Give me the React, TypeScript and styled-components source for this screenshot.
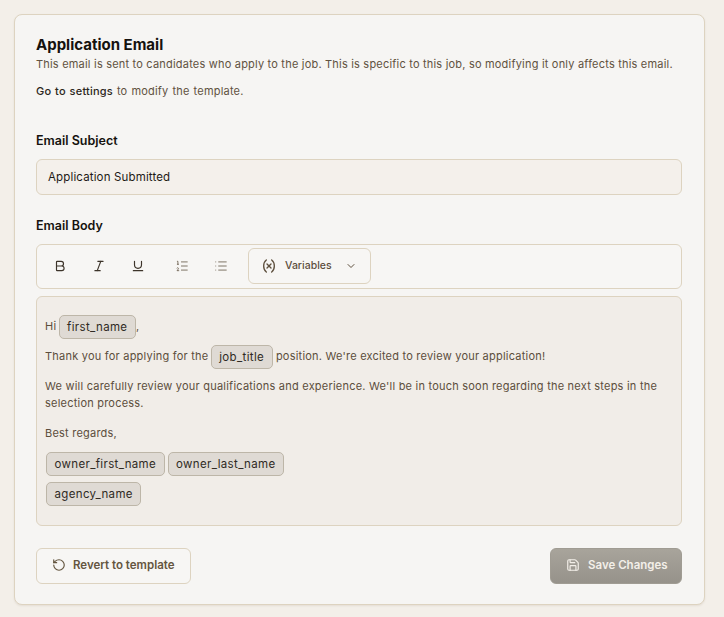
import { createGlobalStyle, styled } from "styled-components";
import { Bold, ChevronDown, Italic, List, ListOrdered, RotateCcw, Save, Underline, Variable } from "lucide-react";

const GlobalStyle = createGlobalStyle`
  html, body {
    margin: 0;
    height: 617px;
    overflow: hidden;
    background: #f3efe9;
    font-family: "Inter", "Liberation Sans", sans-serif;
  }
  * { box-sizing: border-box; }
`;

const Page = styled.div`
  padding: 14px 19px 12px 14px;
`;

const Card = styled.section`
  height: 591px;
  padding: 21px 22px 21px 21px;
  background: #f6f5f3;
  border: 1px solid #ddd3c0;
  border-radius: 8px;
  box-shadow: 0 1px 2px rgba(120, 100, 70, 0.12);
`;

const Title = styled.h1`
  margin: 0;
  font-size: 15px;
  line-height: 18px;
  font-weight: 700;
  color: #15120e;
`;

const Description = styled.p`
  margin: 2px 0 0;
  font-size: 11px;
  line-height: 16px;
  letter-spacing: 0.2px;
  color: #61523f;
`;

const SettingsLine = styled(Description)`
  margin-top: 11px;
  margin-bottom: 34px;
  word-spacing: 0.7px;
`;

const SettingsLink = styled.span`
  font-weight: 500;
  color: #2b2620;
`;

const FieldLabel = styled.div`
  font-size: 12.5px;
  line-height: 16px;
  font-weight: 600;
  color: #15120e;
  margin-bottom: 10px;
`;

const SubjectInput = styled.div`
  height: 36px;
  margin-bottom: 23px;
  padding: 0 11px;
  display: flex;
  align-items: center;
  font-size: 11.5px;
  letter-spacing: 0.15px;
  color: #1d1a16;
  background: #f4f0eb;
  border: 1px solid #ddd3c0;
  border-radius: 6px;
`;

const Toolbar = styled.div`
  height: 45px;
  padding: 0 3px 2px;
  display: flex;
  align-items: center;
  background: #f7f6f4;
  border: 1px solid #ddd3c0;
  border-radius: 6px;
`;

const ToolButton = styled.span`
  width: 39px;
  display: flex;
  justify-content: center;
  color: #3d342a;
`;

const ListButton = styled(ToolButton)`
  color: #6f6252;
`;

const ListGroup = styled.div`
  margin-left: 5px;
  display: flex;
`;

const VariablesButton = styled.div`
  width: 123px;
  height: 36px;
  margin-left: 8px;
  padding: 0 13px 0 12px;
  display: flex;
  align-items: center;
  font-size: 10.5px;
  font-weight: 500;
  color: #5d4f3d;
  border: 1px solid #ddd3c0;
  border-radius: 6px;
`;

const VariablesLabel = styled.span`
  margin-left: 8px;
  flex: 1;
`;

const Editor = styled.div`
  height: 230px;
  margin-top: 7px;
  padding: 18px 8px;
  font-size: 11px;
  letter-spacing: 0.02em;
  color: #5c4e3c;
  background: #f1ede8;
  border: 1px solid #ddd3c0;
  border-radius: 6px;
`;

const EditorLine = styled.div<{ $gap?: number }>`
  min-height: 24px;
  margin-bottom: ${(p) => p.$gap ?? 6}px;
  line-height: 17px;
  display: flow-root;
`;

const Paragraph = styled(EditorLine)`
  padding-top: 3px;
`;

const Token = styled.span`
  display: inline-block;
  height: 24px;
  padding: 0 7.5px;
  line-height: 23px;
  vertical-align: middle;
  font-size: 11.5px;
  letter-spacing: 0.03em;
  color: #2f2a24;
  background: #dfdad4;
  border: 1px solid #bdb6a8;
  border-radius: 5px;
`;

const InlineToken = styled(Token)`
  margin-left: -1px;
`;

const TokenRow = styled.div<{ $top?: number }>`
  margin-top: ${(p) => p.$top ?? 0}px;
  margin-left: 1px;
  display: flex;
  flex-wrap: wrap;
  gap: 3px;
`;

const Footer = styled.div`
  margin-top: 22px;
  display: flex;
  justify-content: space-between;
`;

const RevertButton = styled.div`
  width: 155px;
  height: 36px;
  padding: 0 0 2px 15px;
  display: flex;
  align-items: center;
  gap: 7px;
  font-size: 11.5px;
  font-weight: 600;
  color: #64553f;
  background: #f7f6f4;
  border: 1px solid #ddd3c0;
  border-radius: 6px;
`;

const SaveButton = styled.div`
  width: 132px;
  height: 36px;
  padding: 0 0 2px 15px;
  display: flex;
  align-items: center;
  gap: 8px;
  font-size: 11.5px;
  font-weight: 600;
  color: #f3efe9;
  background: linear-gradient(#a8a49b, #96928a);
  border: 1px solid #a09c93;
  border-radius: 6px;
`;

export default function App() {
  return (
    <Page>
      <GlobalStyle />
      <Card>
        <Title>Application Email</Title>
        <Description>
          This email is sent to candidates who apply to the job. This is specific to this job, so modifying it only affects this email.
        </Description>
        <SettingsLine>
          <SettingsLink>Go to settings</SettingsLink> to modify the template.
        </SettingsLine>

        <FieldLabel>Email Subject</FieldLabel>
        <SubjectInput>Application Submitted</SubjectInput>

        <FieldLabel>Email Body</FieldLabel>
        <Toolbar>
          <ToolButton><Bold size={14} /></ToolButton>
          <ToolButton><Italic size={14} /></ToolButton>
          <ToolButton><Underline size={14} /></ToolButton>
          <ListGroup>
            <ListButton><ListOrdered size={14} strokeWidth={1.5} /></ListButton>
            <ListButton><List size={14} strokeWidth={1.5} /></ListButton>
          </ListGroup>
          <VariablesButton>
            <Variable size={16} />
            <VariablesLabel>Variables</VariablesLabel>
            <ChevronDown size={12} />
          </VariablesButton>
        </Toolbar>

        <Editor>
          <EditorLine>Hi <InlineToken>first_name</InlineToken>,</EditorLine>
          <EditorLine $gap={6}>Thank you for applying for the <InlineToken>job_title</InlineToken> position. We're excited to review your application!</EditorLine>
          <Paragraph $gap={13}>
            We will carefully review your qualifications and experience. We'll be in touch soon regarding the next steps in the selection process.
          </Paragraph>
          <EditorLine $gap={3}>Best regards,</EditorLine>
          <TokenRow>
            <Token>owner_first_name</Token>
            <Token>owner_last_name</Token>
          </TokenRow>
          <TokenRow $top={6}>
            <Token>agency_name</Token>
          </TokenRow>
        </Editor>

        <Footer>
          <RevertButton><RotateCcw size={14} />Revert to template</RevertButton>
          <SaveButton><Save size={14} />Save Changes</SaveButton>
        </Footer>
      </Card>
    </Page>
  );
}
